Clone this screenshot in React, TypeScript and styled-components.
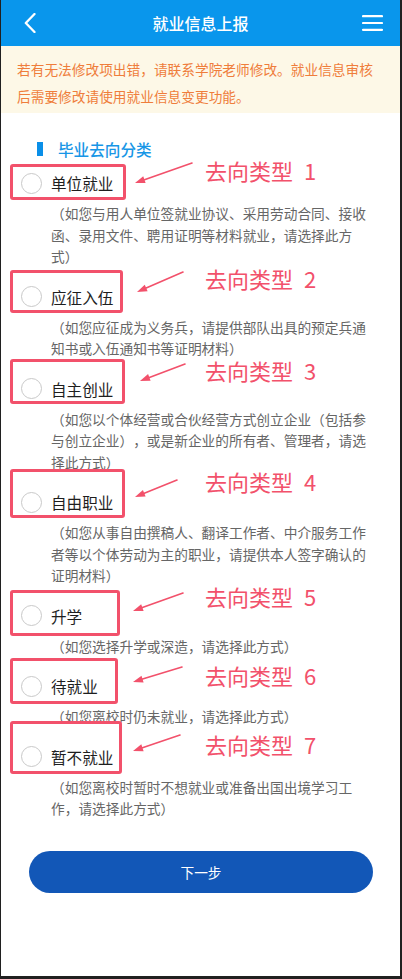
import React from 'react';
import styled, { createGlobalStyle } from 'styled-components';

const GlobalStyle = createGlobalStyle`
  html, body {
    margin: 0;
    padding: 0;
    background: #ffffff;
  }
  body {
    font-family: "Noto Sans CJK SC", "Noto Sans", sans-serif;
    text-spacing-trim: space-all;
  }
  * {
    box-sizing: border-box;
  }
`;

const MARK = '#f2516b';

const Screen = styled.div`
  height: 100vh;
  display: flex;
  flex-direction: column;
  background: #ffffff;
  border-left: 1px solid #202020;
  border-right: 2px solid #202020;
  border-bottom: 3px solid #202020;
`;

const Header = styled.header`
  flex: none;
  height: 46px;
  background: #0996ec;
  display: grid;
  grid-template-columns: 1fr auto 1fr;
  align-items: center;
  color: #ffffff;
`;

const BackButton = styled.div`
  justify-self: start;
  padding-left: 23px;
  display: flex;
  align-items: center;
`;

const MenuButton = styled.div`
  justify-self: end;
  padding-right: 17px;
  display: flex;
  align-items: center;
`;

const Title = styled.h1`
  margin: 0;
  font-size: 16px;
  font-weight: 500;
  letter-spacing: 0;
  line-height: 46px;
`;

const Notice = styled.p`
  margin: 0;
  background: #fdf8e7;
  color: #ef7d3b;
  font-size: 13.7px;
  line-height: 26.5px;
  padding: 10px 20px 4px 16px;
`;

const SectionTitle = styled.h2`
  margin: 25px 0 3px 36px;
  display: flex;
  align-items: center;
  gap: 15px;
  font-size: 15.6px;
  font-weight: 500;
  line-height: 22px;
  color: #1896e6;

  &::before {
    content: '';
    width: 6px;
    height: 14px;
    background: #0a8fe8;
  }
`;

const OptionList = styled.div`
  display: flex;
  flex-direction: column;
`;

const Option = styled.div`
  position: relative;
  margin-bottom: 9px;
`;

const Row = styled.label`
  height: 40px;
  display: flex;
  align-items: center;
  padding-left: 20px;
  gap: 9px;
`;

const Radio = styled.span`
  width: 21px;
  height: 21px;
  border-radius: 50%;
  border: 1px solid #c9c9c9;
  background: #ffffff;
  flex: none;
`;

const Label = styled.span`
  font-size: 15.6px;
  color: #1e1e1e;
`;

const Desc = styled.p`
  margin: 0;
  padding: 0 27px 0 50px;
  font-size: 13.7px;
  line-height: 21.5px;
  color: #666666;
`;

const MarkBox = styled.div<{ $top: number; $height: number; $width: number }>`
  position: absolute;
  left: 9px;
  top: ${(p) => p.$top}px;
  width: ${(p) => p.$width}px;
  height: ${(p) => p.$height}px;
  border: 3px solid ${MARK};
  border-radius: 3px;
  pointer-events: none;
`;

const MarkTag = styled.div<{ $top: number }>`
  position: absolute;
  left: 204px;
  top: ${(p) => p.$top}px;
  line-height: 22px;
  font-size: 22px;
  color: ${MARK};
  white-space: nowrap;
  pointer-events: none;
`;

const MarkNum = styled.span`
  margin-left: 11px;
`;

const MarkArrow = styled.svg`
  position: absolute;
  left: 0;
  top: 0;
  overflow: visible;
  pointer-events: none;
`;

const Footer = styled.div`
  padding: 22px 27px 0 28px;
`;

const NextButton = styled.button`
  width: 100%;
  height: 42px;
  border: none;
  border-radius: 21px;
  background: #1257b7;
  color: #ffffff;
  font-family: inherit;
  font-size: 13.7px;
  cursor: pointer;
`;

type Choice = {
  label: string;
  desc: string;
  boxTop: number;
  boxBottom: number;
  boxRight: number;
  tagDy: number;
  arrow: [number, number, number, number];
};

const choices: Choice[] = [
  {
    label: '单位就业',
    desc: '（如您与用人单位签就业协议、采用劳动合同、接收函、录用文件、聘用证明等材料就业，请选择此方式）',
    boxTop: -19,
    boxBottom: 17,
    boxRight: 126,
    tagDy: -13,
    arrow: [192, -20, 135, 0],
  },
  {
    label: '应征入伍',
    desc: '（如您应征成为义务兵，请提供部队出具的预定兵通知书或入伍通知书等证明材料）',
    boxTop: -27,
    boxBottom: 16,
    boxRight: 123,
    tagDy: -19,
    arrow: [183, -25, 137, -5],
  },
  {
    label: '自主创业',
    desc: '（如您以个体经营或合伙经营方式创立企业（包括参与创立企业），或是新企业的所有者、管理者，请选择此方式）',
    boxTop: -30,
    boxBottom: 15,
    boxRight: 125,
    tagDy: -19,
    arrow: [185, -25, 140, -8],
  },
  {
    label: '自由职业',
    desc: '（如您从事自由撰稿人、翻译工作者、中介服务工作者等以个体劳动为主的职业，请提供本人签字确认的证明材料）',
    boxTop: -33,
    boxBottom: 16,
    boxRight: 125,
    tagDy: -21,
    arrow: [177, -22, 135, -5],
  },
  {
    label: '升学',
    desc: '（如您选择升学或深造，请选择此方式）',
    boxTop: -26,
    boxBottom: 20,
    boxRight: 120,
    tagDy: -20,
    arrow: [183, -23, 133, -5],
  },
  {
    label: '待就业',
    desc: '（如您离校时仍未就业，请选择此方式）',
    boxTop: -28,
    boxBottom: 18,
    boxRight: 118,
    tagDy: -11,
    arrow: [182, -19, 133, -4],
  },
  {
    label: '暂不就业',
    desc: '（如您离校时暂时不想就业或准备出国出境学习工作，请选择此方式）',
    boxTop: -36,
    boxBottom: 17,
    boxRight: 122,
    tagDy: -13,
    arrow: [180, -22, 133, -6],
  },
];

// Rows are 40px tall, so the radio centre sits at y = 20 inside each option.
const CY = 20;

function Arrow({ line }: { line: [number, number, number, number] }) {
  const [x1, dy1, x2, dy2] = line;
  const ax = x1 - 1;
  const ay = CY + dy1;
  const bx = x2 - 1;
  const by = CY + dy2;
  const len = Math.hypot(bx - ax, by - ay);
  const ux = (bx - ax) / len;
  const uy = (by - ay) / len;
  const headLen = 10;
  const headHalf = 3.6;
  const baseX = bx - ux * headLen;
  const baseY = by - uy * headLen;
  const head = [
    `${bx},${by}`,
    `${baseX - uy * headHalf},${baseY + ux * headHalf}`,
    `${baseX + uy * headHalf},${baseY - ux * headHalf}`,
  ].join(' ');
  return (
    <MarkArrow width="1" height="1">
      <line x1={ax} y1={ay} x2={baseX} y2={baseY} stroke={MARK} strokeWidth="1.6" strokeLinecap="round" />
      <polygon points={head} fill={MARK} />
    </MarkArrow>
  );
}

export default function App() {
  return (
    <>
      <GlobalStyle />
      <Screen>
        <Header>
          <BackButton>
            <svg width="12" height="20" viewBox="0 0 12 20">
              <polyline points="10.5,1 1.8,10 10.5,19" fill="none" stroke="#fff" strokeWidth="2.3" strokeLinecap="round" strokeLinejoin="round" />
            </svg>
          </BackButton>
          <Title>就业信息上报</Title>
          <MenuButton>
            <svg width="21" height="16" viewBox="0 0 21 16">
              <g stroke="#fff" strokeWidth="2.2" strokeLinecap="round">
                <line x1="1" y1="1.2" x2="20" y2="1.2" />
                <line x1="1" y1="8" x2="20" y2="8" />
                <line x1="1" y1="14.8" x2="20" y2="14.8" />
              </g>
            </svg>
          </MenuButton>
        </Header>

        <Notice>若有无法修改项出错，请联系学院老师修改。就业信息审核后需要修改请使用就业信息变更功能。</Notice>

        <SectionTitle>毕业去向分类</SectionTitle>

        <OptionList>
          {choices.map((c, i) => (
            <Option key={c.label}>
              <Row>
                <Radio />
                <Label>{c.label}</Label>
              </Row>
              <Desc>{c.desc}</Desc>
              <MarkBox
                $top={CY + c.boxTop}
                $height={c.boxBottom - c.boxTop}
                $width={c.boxRight - 10}
              />
              <Arrow line={c.arrow} />
              <MarkTag $top={CY + c.tagDy - 11}>
                去向类型<MarkNum>{i + 1}</MarkNum>
              </MarkTag>
            </Option>
          ))}
        </OptionList>

        <Footer>
          <NextButton type="button">下一步</NextButton>
        </Footer>
      </Screen>
    </>
  );
}
